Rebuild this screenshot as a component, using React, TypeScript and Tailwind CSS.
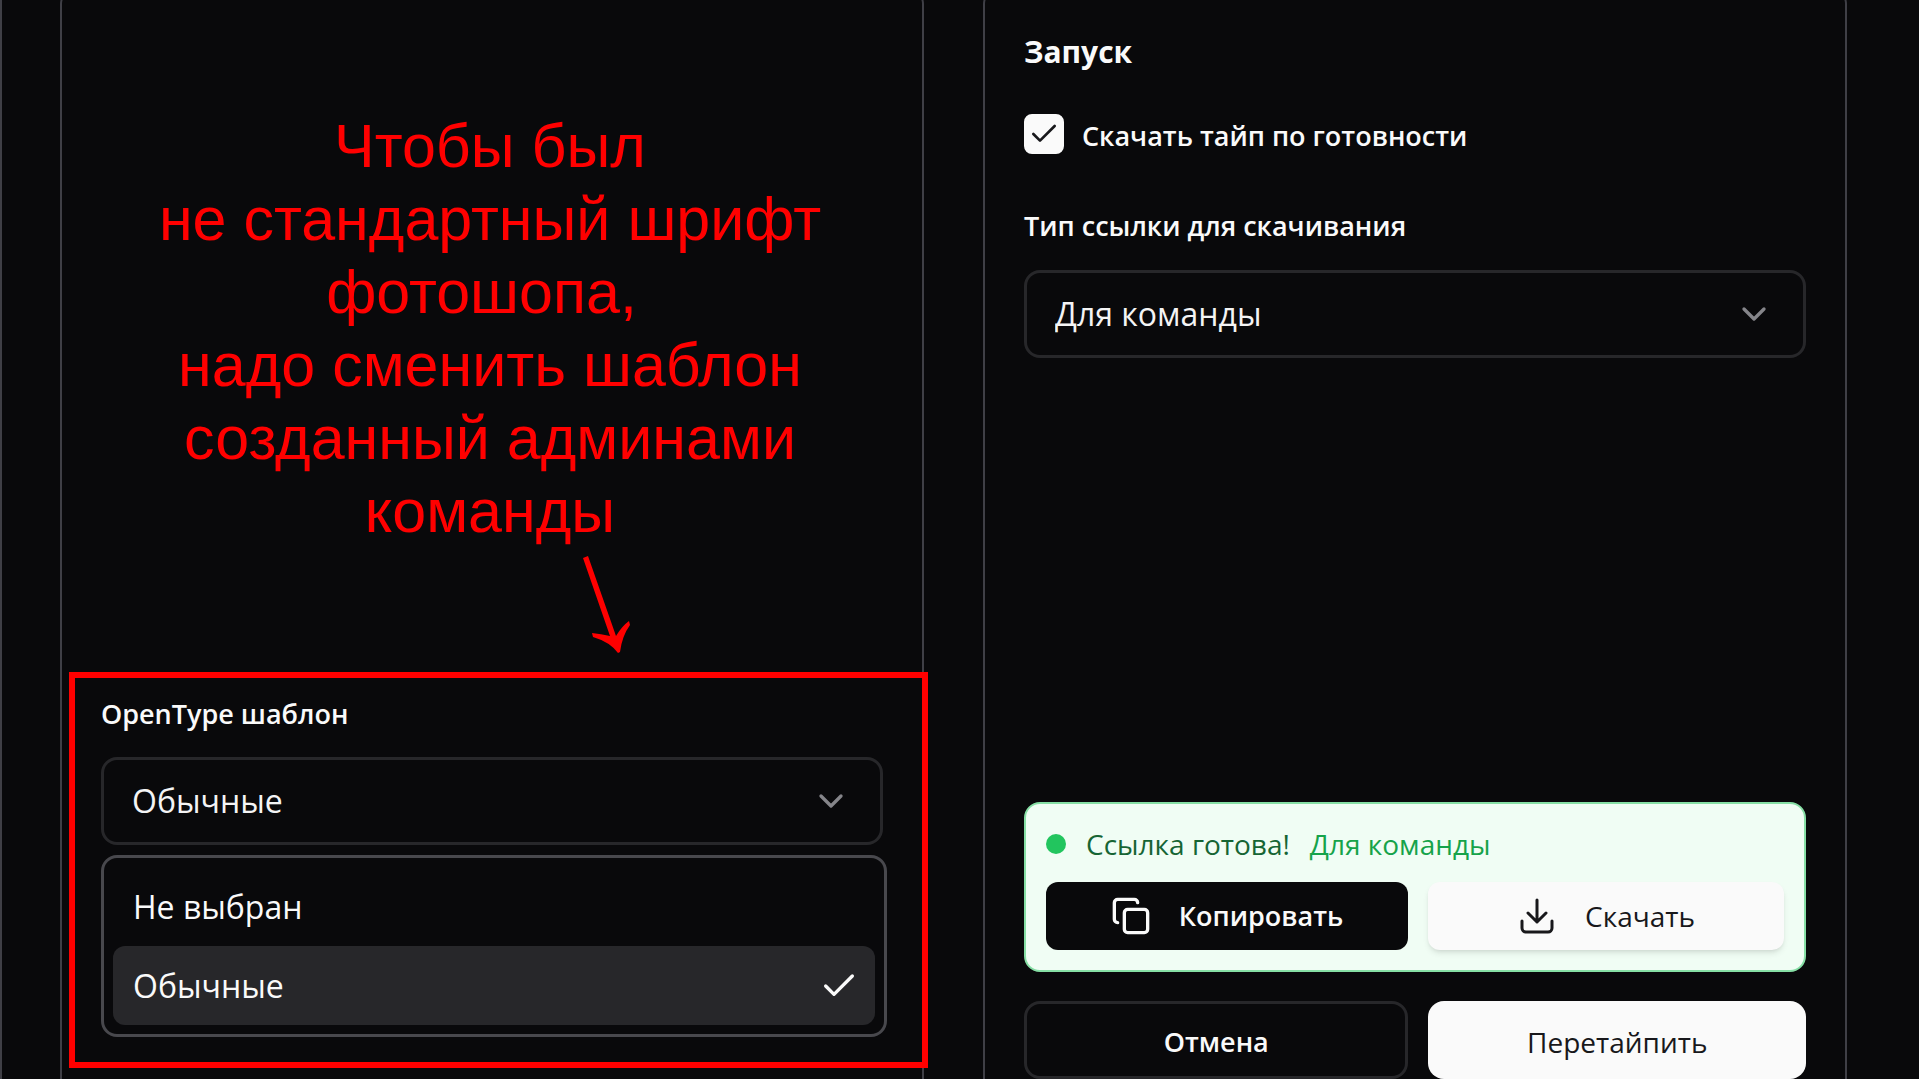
import { useState } from "react";
import { Check, ChevronDown, Copy } from "lucide-react";

const CARD = "flex min-w-0 flex-col rounded-t-2xl border-2 border-b-0 border-[#3f3f46]";

function SelectField({ id, value, options, onChange }: { id: string; value: string; options: string[]; onChange: (v: string) => void }) {
  return (
    <div className="relative">
      <select
        id={id}
        value={value}
        onChange={(e) => onChange(e.target.value)}
        className="block h-[88px] w-full appearance-none rounded-2xl border-[3px] border-[#27272a] bg-[#09090b] px-7 text-[32px] text-[#f4f4f5] outline-none"
      >
        {options.map((o) => (
          <option key={o}>{o}</option>
        ))}
      </select>
      <ChevronDown className="pointer-events-none absolute top-6 right-8 size-10 text-[#85858a]" strokeWidth={2} />
    </div>
  );
}

function DownloadTray() {
  return (
    <svg viewBox="0 0 40 40" className="size-10" fill="none" stroke="currentColor" strokeWidth="3" strokeLinecap="round" strokeLinejoin="round" aria-hidden="true">
      <path d="M20 4v22M11 17l9 9 9-9M5 25v7a4 4 0 0 0 4 4h22a4 4 0 0 0 4-4v-7" />
    </svg>
  );
}

export default function App() {
  const templates = ["Не выбран", "Обычные"];
  const [template, setTemplate] = useState("Обычные");
  const [link, setLink] = useState("Для команды");
  const [auto, setAuto] = useState(true);

  return (
    <main className="flex min-h-screen overflow-hidden border-l-2 border-[#3f3f46] bg-[#09090b] pr-[72px] pl-[58px] font-['Open_Sans','Noto_Sans',sans-serif] text-[#fafafa]">
      <div className="-mt-3 grid flex-1 grid-cols-2 gap-[59px]">
        <section className={CARD}>
          <p className="mt-[120px] pr-1 text-center font-['Liberation_Sans',Arial,sans-serif] text-[61px] leading-[73px] text-[#ff0000]">
            Чтобы был
            <br />
            не стандартный шрифт
            <br />
            фотошопа,&nbsp;
            <br />
            надо сменить шаблон
            <br />
            созданный админами
            <br />
            команды
          </p>
          <svg viewBox="0 0 48 98" className="mt-2 ml-[521px] h-[98px] w-12" fill="#ff0000" aria-hidden="true">
            <path d="M0 2L5 0L33 80Q39 70 46 65L47 69Q39 80 37 96L35 97Q27 86 10 81L9 77Q18 78 27 80Z" />
          </svg>

          <div className="mt-[18px] -mr-1.5 mb-[11px] ml-[7px] border-[6px] border-[#ff0000] pt-4 pr-[35px] pb-[25px] pl-[26px]">
            <label htmlFor="template" className="mb-[23px] block text-[27px] leading-10 font-semibold">
              OpenType шаблон
            </label>
            <div className="pr-1">
              <SelectField id="template" value={template} options={templates} onChange={setTemplate} />
            </div>
            <ul role="listbox" aria-label="OpenType шаблон" className="mt-2.5 rounded-2xl border-[3px] border-[#48484d] p-[9px]">
              {templates.map((t) => (
                <li
                  key={t}
                  role="option"
                  aria-selected={t === template}
                  onClick={() => setTemplate(t)}
                  className="flex h-[79px] items-center justify-between rounded-xl pr-4 pl-5 text-[32px] aria-selected:bg-[#27272a]"
                >
                  {t}
                  {t === template && <Check className="size-10" strokeWidth={2} />}
                </li>
              ))}
            </ul>
          </div>
        </section>

        <section className={CARD + " px-[39px]"}>
          <h2 className="mt-[42px] text-[30px] leading-10 font-bold">Запуск</h2>
          <div className="mt-10 flex items-center gap-[18px]">
            <span className="relative size-10">
              <input
                id="auto"
                type="checkbox"
                checked={auto}
                onChange={(e) => setAuto(e.target.checked)}
                className="block size-10 appearance-none rounded-lg border-2 border-[#fafafa] checked:bg-[#fafafa]"
              />
              {auto && <Check className="pointer-events-none absolute top-1 left-1 size-8 text-[#18181b]" strokeWidth={2} />}
            </span>
            <label htmlFor="auto" className="pt-1 text-[27px] leading-10 font-semibold">
              Скачать тайп по готовности
            </label>
          </div>
          <label htmlFor="link" className="mt-[50px] mb-6 block text-[27px] leading-10 font-semibold">
            Тип ссылки для скачивания
          </label>
          <SelectField id="link" value={link} options={["Для команды", "Для всех"]} onChange={setLink} />

          <div className="mt-auto rounded-2xl border-2 border-[#86dfa5] bg-[#f0fdf4] px-5 pt-5 pb-5">
            <div className="flex items-center text-[28px] leading-10">
              <span className="mr-5 size-5 rounded-full bg-[#22c55e]" />
              <span className="mr-5 font-medium text-[#166534]">Ссылка готова!</span>
              <span className="text-[#16a34a]">Для команды</span>
            </div>
            <div className="mt-[18px] grid grid-cols-[362fr_356fr] gap-5">
              <button className="flex h-[68px] items-center justify-center gap-7 rounded-xl bg-[#09090b] text-[27px] font-semibold">
                <Copy className="size-10" strokeWidth={2} />
                Копировать
              </button>
              <button className="flex h-[68px] items-center justify-center gap-7 rounded-xl bg-[#fafafa] text-[28px] font-medium text-[#18181b] shadow-md">
                <DownloadTray />
                Скачать
              </button>
            </div>
          </div>
          <div className="mt-[29px] grid grid-cols-[385fr_378fr] gap-5">
            <button className="h-[78px] rounded-2xl border-[3px] border-[#27272a] pt-1 text-[27px] font-semibold">Отмена</button>
            <button className="h-[78px] rounded-2xl bg-[#fafafa] pt-1 text-[28px] font-medium text-[#18181b]">Перетайпить</button>
          </div>
        </section>
      </div>
    </main>
  );
}
